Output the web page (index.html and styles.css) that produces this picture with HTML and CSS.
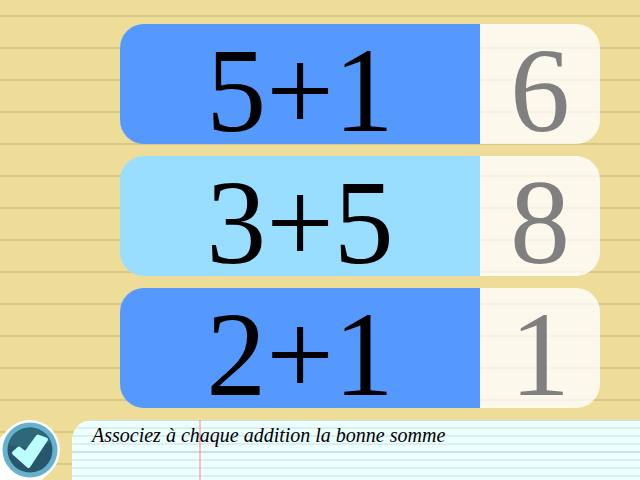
FILE: index.html
```
<!DOCTYPE html>
<html lang="fr">
<head>
<meta charset="utf-8">
<meta name="viewport" content="width=device-width, initial-scale=1">
<title>Associez à chaque addition la bonne somme</title>
<link rel="stylesheet" href="styles.css">
</head>
<body>
<main class="board">
  <div class="row"><div class="sum">5+1</div><div class="answer">6</div></div>
  <div class="row row-light"><div class="sum">3+5</div><div class="answer">8</div></div>
  <div class="row"><div class="sum">2+1</div><div class="answer">1</div></div>
</main>
<footer class="bar">
  <button class="check" type="button" aria-label="Valider">
    <svg viewBox="0 0 60 60" aria-hidden="true">
      <path fill="#fff" d="M0 60V18L9 9L51 51L42 60Z"/>
      <circle cx="30" cy="30" r="30" fill="#fff"/>
      <circle cx="30" cy="30" r="27.5" fill="#66b2cc"/>
      <circle cx="30" cy="30" r="22.5" fill="#28566c"/>
      <path fill="#2f677a" d="M8 25A22.5 22.5 0 0 1 51 22Q30 31 8 25Z"/>
      <path fill="#bff" stroke="#bff" stroke-width="4" stroke-linejoin="round" d="M14 33L19 28.500L25.500 33.500L38 16.500L46 19.500L28.500 46Z"/>
    </svg>
  </button>
  <p class="note">Associez à chaque addition la bonne somme</p>
</footer>
</body>
</html>
```
FILE: styles.css
```
* {
  box-sizing: border-box;
}

body {
  margin: 0;
  min-height: 100vh;
  display: flex;
  flex-direction: column;
  font-family: "Liberation Serif", "Times New Roman", serif;
  color: #000;
  background: repeating-linear-gradient(#ed9 0 15px, #d6c788 15px 17px, #ed9 17px 32px);
}

.board {
  flex: 1;
  display: flex;
  flex-direction: column;
  gap: 12px;
  padding: 24px 40px 12px 120px;
}

.row {
  display: grid;
  grid-template-columns: 3fr 1fr;
  height: 120px;
  font-size: 120px;
  line-height: 133px;
  text-align: center;
}

.sum {
  height: 120px;
  border-radius: 24px 0 0 24px;
  background: #59f;
}

.row-light .sum {
  background: #9df;
}

.answer {
  height: 120px;
  border-radius: 0 24px 24px 0;
  color: #808080;
  background: rgba(255, 255, 255, 0.8);
}

.bar {
  display: flex;
  gap: 12px;
  height: 60px;
}

.check {
  flex: none;
  width: 60px;
  padding: 0;
  border: 0;
  background: none;
  cursor: pointer;
}

.check svg {
  display: block;
  width: 100%;
}

.note {
  flex: 1;
  margin: 0;
  padding: 4px 20px;
  border-top-left-radius: 20px;
  font-size: 20px;
  line-height: 23px;
  font-style: italic;
  background:
    linear-gradient(rgba(255, 128, 128, 0.5) 0 0) 127px 0 / 2px 100% no-repeat,
    repeating-linear-gradient(#cddfdf 0 1px, transparent 1px 31px, #cddfdf 31px 32px),
    repeating-linear-gradient(#d9eff2 0 1px, #eff 1px 7px, #d9eff2 7px 8px);
}
```
